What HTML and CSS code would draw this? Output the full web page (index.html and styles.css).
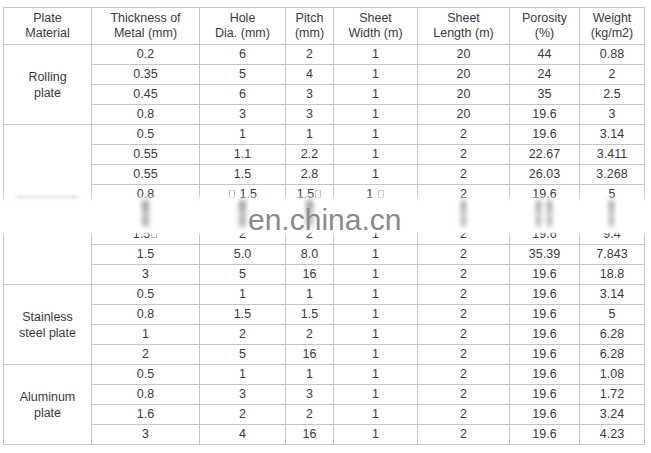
FILE: index.html
```html
<!DOCTYPE html>
<html>
<head>
<meta charset="utf-8">
<link rel="stylesheet" href="styles.css">
</head>
<body>
<div class="wrap">
<table class="spec">
<colgroup>
<col class="c1"><col class="c2"><col class="c3"><col class="c4"><col class="c5"><col class="c6"><col class="c7"><col class="c8">
</colgroup>
<thead>
<tr><th>Plate<br>Material</th><th>Thickness of<br>Metal (mm)</th><th>Hole<br>Dia. (mm)</th><th>Pitch<br>(mm)</th><th>Sheet<br>Width (m)</th><th>Sheet<br>Length (m)</th><th>Porosity<br>(%)</th><th>Weight<br>(kg/m2)</th></tr>
</thead>
<tbody>
<tr><td rowspan="4" class="grp">Rolling<br>plate</td><td>0.2</td><td>6</td><td>2</td><td>1</td><td>20</td><td>44</td><td>0.88</td></tr>
<tr><td>0.35</td><td>5</td><td>4</td><td>1</td><td>20</td><td>24</td><td>2</td></tr>
<tr><td>0.45</td><td>6</td><td>3</td><td>1</td><td>20</td><td>35</td><td>2.5</td></tr>
<tr><td>0.8</td><td>3</td><td>3</td><td>1</td><td>20</td><td>19.6</td><td>3</td></tr>

<tr><td rowspan="8" class="grp hidden-label">Galvanized</td><td>0.5</td><td>1</td><td>1</td><td>1</td><td>2</td><td>19.6</td><td>3.14</td></tr>
<tr><td>0.55</td><td>1.1</td><td>2.2</td><td>1</td><td>2</td><td>22.67</td><td>3.411</td></tr>
<tr><td>0.55</td><td>1.5</td><td>2.8</td><td>1</td><td>2</td><td>26.03</td><td>3.268</td></tr>
<tr><td>0.8</td><td><span class="box"></span> 1.5</td><td>1.5<span class="box"></span></td><td>1 <span class="box"></span></td><td>2</td><td>19.6</td><td>5</td></tr>
<tr><td>1</td><td>2</td><td>2</td><td>1</td><td>2</td><td>19.6</td><td>6.28</td></tr>
<tr><td>1.5<span class="box"></span></td><td>2</td><td>2</td><td>1</td><td>2</td><td>19.6</td><td>9.4</td></tr>
<tr><td>1.5</td><td>5.0</td><td>8.0</td><td>1</td><td>2</td><td>35.39</td><td>7.843</td></tr>
<tr><td>3</td><td>5</td><td>16</td><td>1</td><td>2</td><td>19.6</td><td>18.8</td></tr>

<tr><td rowspan="4" class="grp">Stainless<br>steel plate</td><td>0.5</td><td>1</td><td>1</td><td>1</td><td>2</td><td>19.6</td><td>3.14</td></tr>
<tr><td>0.8</td><td>1.5</td><td>1.5</td><td>1</td><td>2</td><td>19.6</td><td>5</td></tr>
<tr><td>1</td><td>2</td><td>2</td><td>1</td><td>2</td><td>19.6</td><td>6.28</td></tr>
<tr><td>2</td><td>5</td><td>16</td><td>1</td><td>2</td><td>19.6</td><td>6.28</td></tr>

<tr><td rowspan="4" class="grp">Aluminum<br>plate</td><td>0.5</td><td>1</td><td>1</td><td>1</td><td>2</td><td>19.6</td><td>1.08</td></tr>
<tr><td>0.8</td><td>3</td><td>3</td><td>1</td><td>2</td><td>19.6</td><td>1.72</td></tr>
<tr><td>1.6</td><td>2</td><td>2</td><td>1</td><td>2</td><td>19.6</td><td>3.24</td></tr>
<tr><td>3</td><td>4</td><td>16</td><td>1</td><td>2</td><td>19.6</td><td>4.23</td></tr>
</tbody>
</table>

<div class="band">
  <div class="smudges">
    <div class="cell"><div class="smear"></div></div>
    <div class="cell"><div class="smudge"></div></div>
    <div class="cell"><div class="smudge"></div></div>
    <div class="cell"><div class="smudge"></div></div>
    <div class="cell"></div>
    <div class="cell"><div class="smudge thin"></div></div>
    <div class="cell pair"><div class="smudge thin"></div><div class="smudge thin"></div></div>
    <div class="cell"><div class="smudge thin"></div></div>
  </div>
  <div class="mark">en.china.cn</div>
</div>
</div>
</body>
</html>
```

FILE: styles.css
```css
html, body {
  margin: 0;
  padding: 0;
  background: #fff;
}

.wrap {
  position: relative;
  padding: 7px 0 0 3px;
  width: 651px;
  height: 453px;
  box-sizing: border-box;
}

.spec {
  border-collapse: collapse;
  table-layout: fixed;
  width: 641px;
  font-family: "Liberation Sans", Arial, sans-serif;
  font-size: 12.5px;
  color: #3a3a3a;
}

.c1 { width: 88px; }
.c2 { width: 108px; }
.c3 { width: 86px; }
.c4 { width: 48px; }
.c5 { width: 84px; }
.c6 { width: 92px; }
.c7 { width: 70px; }
.c8 { width: 65px; }

.spec th,
.spec td {
  border: 1px solid #c6c6c6;
  padding: 0;
  text-align: center;
  vertical-align: middle;
  font-weight: normal;
  white-space: nowrap;
}

.spec th {
  height: 36px;
  line-height: 15px;
}

.spec td {
  height: 19px;
  line-height: 19px;
}

.spec td.grp {
  line-height: 16px;
}

.spec td.hidden-label {
  padding-top: 7px;
}

.box {
  display: inline-block;
  width: 4px;
  height: 6px;
  border: 1px solid #c4c4c4;
  vertical-align: baseline;
  margin: 0 1px;
}

.band {
  position: absolute;
  left: 0;
  top: 195px;
  width: 651px;
  height: 40px;
  background: linear-gradient(to bottom,
    rgba(255,255,255,0) 0,
    rgba(255,255,255,0.85) 5px,
    #fff 7px,
    #fff 37px,
    rgba(255,255,255,0) 40px);
}

.smudges {
  margin-left: 3px;
  display: grid;
  grid-template-columns: 88px 108px 86px 48px 84px 92px 70px 65px;
  height: 100%;
}

.cell {
  display: flex;
  justify-content: center;
  align-items: flex-start;
}

.cell.pair {
  gap: 6px;
}

.smudge {
  width: 7px;
  height: 32px;
  margin-top: 2px;
  background: linear-gradient(to bottom,
    rgba(80,80,80,0) 0,
    rgba(80,80,80,0.6) 22%,
    rgba(80,80,80,0.35) 55%,
    rgba(80,80,80,0.5) 80%,
    rgba(80,80,80,0) 100%);
  filter: blur(2.5px);
}

.smudge.thin {
  width: 5px;
}

.smear {
  width: 62px;
  height: 4px;
  margin-top: 0;
  background: rgba(160,160,160,0.2);
  filter: blur(1.5px);
}

.mark {
  position: absolute;
  left: 248px;
  top: 10px;
  font-family: "Liberation Sans", Arial, sans-serif;
  font-size: 30px;
  line-height: 30px;
  color: #8a8a8a;
  white-space: nowrap;
}
```
